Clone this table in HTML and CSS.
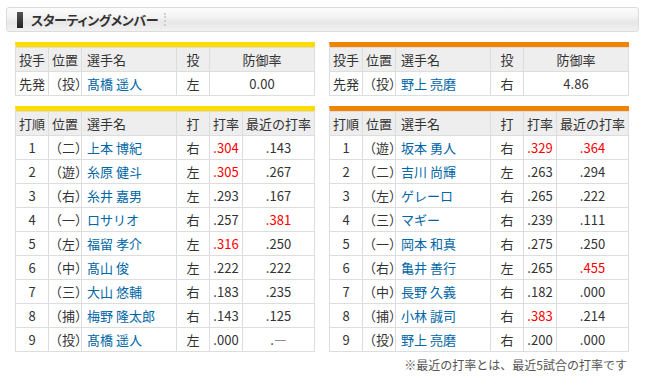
FILE: index.html
```html
<!DOCTYPE html>
<html lang="ja">
<head>
<meta charset="utf-8">
<title>スターティングメンバー</title>
<link rel="stylesheet" href="styles.css">
</head>
<body>
<div class="page">
  <div class="title-bar">
    <span class="title-mark"></span>
    <h2 class="title">スターティングメンバー</h2>
    <span class="title-sep"></span>
  </div>
  <div class="teams">
    <div class="team team-yellow">
      <table class="tbl">
        <colgroup><col class="c-s"><col class="c-s"><col class="c-name"><col class="c-s"><col class="c-era"></colgroup>
        <tr><th>投手</th><th>位置</th><th class="l">選手名</th><th>投</th><th>防御率</th></tr>
        <tr><td>先発</td><td>（投）</td><td class="l"><a href="#">髙橋 遥人</a></td><td>左</td><td>0.00</td></tr>
      </table>
      <table class="tbl">
        <colgroup><col class="c-s"><col class="c-s"><col class="c-name"><col class="c-s"><col class="c-s"><col class="c-rec"></colgroup>
        <tr><th>打順</th><th>位置</th><th class="l">選手名</th><th>打</th><th>打率</th><th>最近の打率</th></tr>
        <tr><td>1</td><td>（二）</td><td class="l"><a href="#">上本 博紀</a></td><td>右</td><td class="hi">.304</td><td>.143</td></tr>
        <tr><td>2</td><td>（遊）</td><td class="l"><a href="#">糸原 健斗</a></td><td>左</td><td class="hi">.305</td><td>.267</td></tr>
        <tr><td>3</td><td>（右）</td><td class="l"><a href="#">糸井 嘉男</a></td><td>左</td><td>.293</td><td>.167</td></tr>
        <tr><td>4</td><td>（一）</td><td class="l"><a href="#">ロサリオ</a></td><td>右</td><td>.257</td><td class="hi">.381</td></tr>
        <tr><td>5</td><td>（左）</td><td class="l"><a href="#">福留 孝介</a></td><td>左</td><td class="hi">.316</td><td>.250</td></tr>
        <tr><td>6</td><td>（中）</td><td class="l"><a href="#">髙山 俊</a></td><td>左</td><td>.222</td><td>.222</td></tr>
        <tr><td>7</td><td>（三）</td><td class="l"><a href="#">大山 悠輔</a></td><td>右</td><td>.183</td><td>.235</td></tr>
        <tr><td>8</td><td>（捕）</td><td class="l"><a href="#">梅野 隆太郎</a></td><td>右</td><td>.143</td><td>.125</td></tr>
        <tr><td>9</td><td>（投）</td><td class="l"><a href="#">髙橋 遥人</a></td><td>左</td><td>.000</td><td>.―</td></tr>
      </table>
    </div>
    <div class="team team-orange">
      <table class="tbl">
        <colgroup><col class="c-s"><col class="c-s"><col class="c-name"><col class="c-s"><col class="c-era"></colgroup>
        <tr><th>投手</th><th>位置</th><th class="l">選手名</th><th>投</th><th>防御率</th></tr>
        <tr><td>先発</td><td>（投）</td><td class="l"><a href="#">野上 亮磨</a></td><td>右</td><td>4.86</td></tr>
      </table>
      <table class="tbl">
        <colgroup><col class="c-s"><col class="c-s"><col class="c-name"><col class="c-s"><col class="c-s"><col class="c-rec"></colgroup>
        <tr><th>打順</th><th>位置</th><th class="l">選手名</th><th>打</th><th>打率</th><th>最近の打率</th></tr>
        <tr><td>1</td><td>（遊）</td><td class="l"><a href="#">坂本 勇人</a></td><td>右</td><td class="hi">.329</td><td class="hi">.364</td></tr>
        <tr><td>2</td><td>（二）</td><td class="l"><a href="#">吉川 尚輝</a></td><td>左</td><td>.263</td><td>.294</td></tr>
        <tr><td>3</td><td>（左）</td><td class="l"><a href="#">ゲレーロ</a></td><td>右</td><td>.265</td><td>.222</td></tr>
        <tr><td>4</td><td>（三）</td><td class="l"><a href="#">マギー</a></td><td>右</td><td>.239</td><td>.111</td></tr>
        <tr><td>5</td><td>（一）</td><td class="l"><a href="#">岡本 和真</a></td><td>右</td><td>.275</td><td>.250</td></tr>
        <tr><td>6</td><td>（右）</td><td class="l"><a href="#">亀井 善行</a></td><td>左</td><td>.265</td><td class="hi">.455</td></tr>
        <tr><td>7</td><td>（中）</td><td class="l"><a href="#">長野 久義</a></td><td>右</td><td>.182</td><td>.000</td></tr>
        <tr><td>8</td><td>（捕）</td><td class="l"><a href="#">小林 誠司</a></td><td>右</td><td class="hi">.383</td><td>.214</td></tr>
        <tr><td>9</td><td>（投）</td><td class="l"><a href="#">野上 亮磨</a></td><td>右</td><td>.200</td><td>.000</td></tr>
      </table>
      <p class="note">※最近の打率とは、最近5試合の打率です</p>
    </div>
  </div>
</div>
</body>
</html>
```

FILE: styles.css
```css
* { box-sizing: border-box; }
html, body { margin: 0; padding: 0; background: #fff; }
body {
  font-family: "Noto Sans CJK JP", "Noto Sans", sans-serif;
  font-size: 13px;
  color: #333;
}
.page { width: 645px; padding-top: 7px; }

.title-bar {
  margin-left: 6px;
  width: 633px;
  height: 25px;
  border: 1px solid #dcdcdc;
  border-radius: 3px;
  background: linear-gradient(to bottom, #fcfcfc 0%, #f3f3f3 40%, #e7e7e7 60%, #f1f1f1 100%);
  display: flex;
  align-items: center;
  padding-left: 10px;
}
.title-mark {
  width: 6px;
  height: 16px;
  background: linear-gradient(to bottom, #555, #222);
  margin-right: 8px;
}
.title {
  margin: 0;
  font-size: 13px;
  font-weight: bold;
  color: #333;
  font-feature-settings: "palt";
  letter-spacing: -0.4px;
  line-height: 23px;
}
.title-sep {
  width: 0;
  height: 13px;
  border-left: 2px dotted #cfcfcf;
  margin-left: 6px;
}

.teams {
  display: flex;
  gap: 14px;
  padding-left: 15px;
  margin-top: 10px;
}
.team { width: 300px; }

.tbl {
  width: 300px;
  table-layout: fixed;
  border-collapse: separate;
  border-spacing: 0;
  border-left: 1px solid #ddd;
  border-top: 5px solid #ffdc00;
  margin-bottom: 10px;
}
.team-orange .tbl { border-top-color: #f08300; }
.c-s { width: 33px; }
.c-name { width: 95px; }
.c-era { width: 105px; }
.c-rec { width: 72px; }

.tbl th, .tbl td {
  height: 24px;
  padding: 0;
  border-right: 1px solid #ddd;
  border-bottom: 1px solid #ddd;
  text-align: center;
  vertical-align: middle;
  white-space: nowrap;
  font-weight: normal;
  line-height: 16px;
}
.tbl th {
  background: #eee;
  border-top: 1px solid #ddd;
  height: 25px;
}
.tbl .l { text-align: left; padding-left: 5px; }
.tbl a { color: #0066a6; text-decoration: none; }
.tbl .hi { color: #ff0000; }

.note {
  margin: -6px 0 0;
  text-align: right;
  padding-right: 2px;
  font-size: 12px;
  line-height: 18px;
  color: #555;
}
```
